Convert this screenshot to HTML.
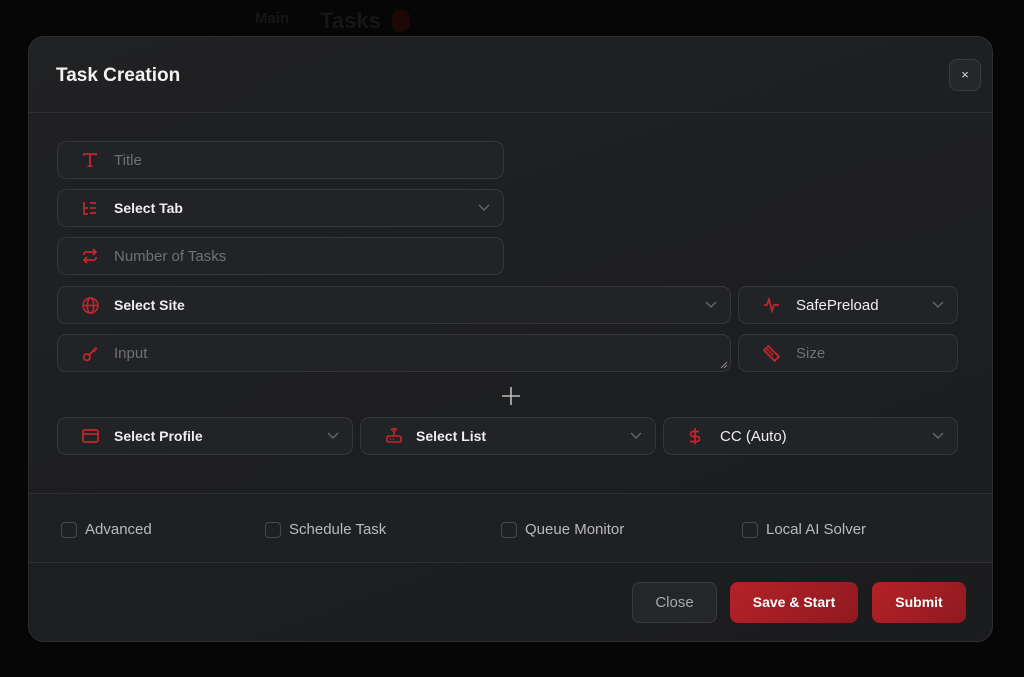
<!DOCTYPE html>
<html><head><meta charset="utf-8"><style>
*{box-sizing:border-box;margin:0;padding:0}
body{width:1024px;height:677px;background:#060606;font-family:"Liberation Sans",sans-serif;position:relative;overflow:hidden}
.bgt{position:absolute;color:#161616;font-size:18px;font-weight:bold}
.modal{position:absolute;left:28px;top:36px;width:965px;height:606px;background:linear-gradient(160deg,#202123,#1b1c1e);border:1px solid #2c2d30;border-radius:16px;overflow:hidden}
.h{position:absolute;left:27px;top:28px;color:#f2f2f2;font-size:19px;font-weight:bold}
.x{position:absolute;left:920px;top:22px;width:32px;height:32px;border:1px solid #3a3b3e;border-radius:8px;background:#26272a;color:#ddd;font-size:13px;text-align:center;line-height:30px}
.div{position:absolute;left:0;width:100%;height:1px;background:#2e2f32}
.f{position:absolute;background:#222326;border:1px solid #35363a;border-radius:9px;height:38px;color:#707175;font-size:15px;line-height:38px;padding-left:56px}
.f.w{color:#eee;font-weight:bold;font-size:14px;line-height:36px}
.f svg.i{position:absolute;left:24px;top:10px}
.chev{position:absolute;right:13px;top:14px}
.cb{position:absolute;top:484px;color:#b9babd;font-size:15px;padding-left:24px;line-height:18px}
.cb:before{content:"";position:absolute;left:0;top:1px;width:14px;height:14px;border:1px solid #47484c;border-radius:4px}
.btn{position:absolute;top:545px;height:41px;border-radius:8px;text-align:center;line-height:40px;font-size:14px;font-weight:bold;color:#fff}
.red{background:linear-gradient(135deg,#b52228,#8e1a1f)}
</style></head><body>
<div class="bgt" style="left:255px;top:10px;font-size:15px">Main</div>
<div class="bgt" style="left:320px;top:8px;font-size:22px">Tasks</div>
<div style="position:absolute;left:392px;top:10px;width:18px;height:22px;border-radius:8px;background:#1e0707"></div>
<div class="modal">
<div class="h">Task Creation</div>
<div class="x">×</div>
<div class="div" style="top:75px"></div>
<div class="div" style="top:456px"></div>
<div style="position:absolute;left:0;top:457px;width:100%;height:68px;background:#1f2022"></div>
<div class="div" style="top:525px"></div>

<div class="f" style="left:28px;top:104px;width:447px">
<svg class="i" width="16" height="16" viewBox="0 0 16 16" fill="none" stroke="#c4262c" stroke-width="1.8"><path d="M2 3.5V2h12v1.5M8 2v12M5.5 14h5"/></svg>Title</div>
<div class="f w" style="left:28px;top:152px;width:447px">
<svg class="i" width="16" height="16" viewBox="0 0 16 16" fill="none" stroke="#c4262c" stroke-width="1.7"><path d="M2 2v12h4M2 8h4M8 3h6M8 8h6M8 13h6"/></svg>Select Tab
<svg class="chev" width="12" height="8" viewBox="0 0 12 8" fill="none" stroke="#666" stroke-width="1.4"><path d="M1 1l5 5 5-5"/></svg></div>
<div class="f" style="left:28px;top:200px;width:447px">
<svg class="i" width="16" height="16" viewBox="0 0 16 16" fill="none" stroke="#c4262c" stroke-width="1.7"><path d="M11 1l3 3-3 3M14 4H4a2 2 0 0 0-2 2v1M5 15l-3-3 3-3M2 12h10a2 2 0 0 0 2-2V9"/></svg>Number of Tasks</div>
<div class="f w" style="left:28px;top:249px;width:674px">
<svg class="i" width="17" height="17" viewBox="0 0 16 16" fill="none" stroke="#c4262c" stroke-width="1.5"><circle cx="8" cy="8" r="7"/><ellipse cx="8" cy="8" rx="3" ry="7"/><path d="M1 8h14"/></svg>Select Site
<svg class="chev" width="12" height="8" viewBox="0 0 12 8" fill="none" stroke="#666" stroke-width="1.4"><path d="M1 1l5 5 5-5"/></svg></div>
<div class="f w" style="left:709px;top:249px;width:220px;font-weight:normal;font-size:15px;padding-left:57px;line-height:38px">
<svg class="i" width="18" height="16" viewBox="0 0 18 16" fill="none" stroke="#c4262c" stroke-width="1.7"><path d="M1 8h3l2-6 3 12 2-6h5"/></svg>SafePreload
<svg class="chev" width="12" height="8" viewBox="0 0 12 8" fill="none" stroke="#666" stroke-width="1.4"><path d="M1 1l5 5 5-5"/></svg></div>
<div class="f" style="left:28px;top:297px;width:674px">
<svg class="i" width="17" height="17" viewBox="0 0 16 16" fill="none" stroke="#c4262c" stroke-width="1.7"><circle cx="4.5" cy="11.5" r="3"/><path d="M6.5 9.5L13 3M11 5l1.5 1.5M12.5 2.5L14 4"/></svg>Input
<svg style="position:absolute;right:2px;bottom:2px" width="8" height="8" viewBox="0 0 8 8" stroke="#888" stroke-width="1"><path d="M7 1L1 7M7 4L4 7"/></svg></div>
<div class="f" style="left:709px;top:297px;width:220px;padding-left:57px">
<svg class="i" width="17" height="17" viewBox="0 0 16 16" fill="none" stroke="#c4262c" stroke-width="1.7"><path d="M1 5l4-4 10 10-4 4z M4 4l1.5 1.5M6 6l1.5 1.5M8 8l1.5 1.5"/></svg>Size</div>
<svg style="position:absolute;left:472px;top:349px" width="20" height="20" viewBox="0 0 20 20" stroke="#bbb" stroke-width="1.6"><path d="M10 1v18M1 10h18"/></svg>
<div class="f w" style="left:28px;top:380px;width:296px">
<svg class="i" width="17" height="16" viewBox="0 0 17 16" fill="none" stroke="#c4262c" stroke-width="1.7"><rect x="1" y="2" width="15" height="12" rx="2"/><path d="M1 6h15"/></svg>Select Profile
<svg class="chev" width="12" height="8" viewBox="0 0 12 8" fill="none" stroke="#666" stroke-width="1.4"><path d="M1 1l5 5 5-5"/></svg></div>
<div class="f w" style="left:331px;top:380px;width:296px;padding-left:55px">
<svg class="i" width="18" height="18" viewBox="0 0 18 18" fill="none" stroke="#c4262c" stroke-width="1.6" style="top:8px"><rect x="2" y="10" width="14" height="6" rx="1.5"/><path d="M9 10V6M6 4a4 4 0 0 1 6 0M7.5 5.5a2 2 0 0 1 3 0M5 13h1M8 13h1"/></svg>Select List
<svg class="chev" width="12" height="8" viewBox="0 0 12 8" fill="none" stroke="#666" stroke-width="1.4"><path d="M1 1l5 5 5-5"/></svg></div>
<div class="f w" style="left:634px;top:380px;width:295px;font-weight:normal;font-size:15px;line-height:38px">
<svg class="i" width="14" height="18" viewBox="0 0 14 18" fill="none" stroke="#c4262c" stroke-width="1.7" style="top:9px"><path d="M7 1v16M11 4.5H5a2.5 2.5 0 0 0 0 5h4a2.5 2.5 0 0 1 0 5H2"/></svg>CC (Auto)
<svg class="chev" width="12" height="8" viewBox="0 0 12 8" fill="none" stroke="#666" stroke-width="1.4"><path d="M1 1l5 5 5-5"/></svg></div>

<div class="cb" style="left:32px">Advanced</div>
<div class="cb" style="left:236px">Schedule Task</div>
<div class="cb" style="left:472px">Queue Monitor</div>
<div class="cb" style="left:713px">Local AI Solver</div>

<div class="btn" style="left:603px;width:85px;background:#25262a;border:1px solid #3a3b3e;color:#a8a9ad;font-weight:normal;font-size:15px">Close</div>
<div class="btn red" style="left:701px;width:128px">Save &amp; Start</div>
<div class="btn red" style="left:843px;width:94px">Submit</div>
</div>
</body></html>
